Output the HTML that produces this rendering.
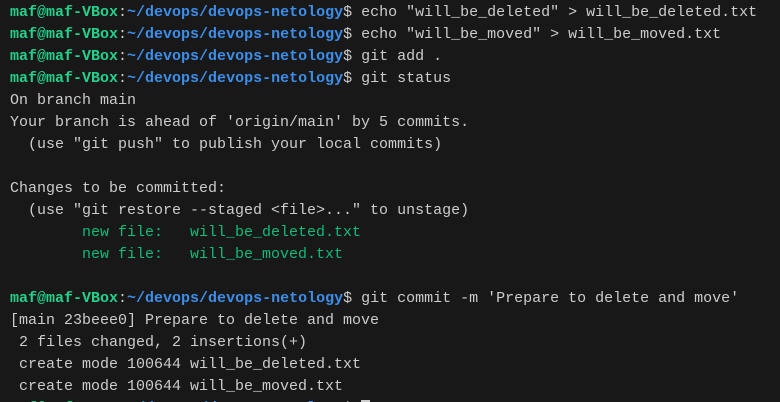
<!DOCTYPE html>
<html><head><meta charset="utf-8"><style>
html,body{margin:0;padding:0;background:#181818;width:780px;height:402px;overflow:hidden}
pre{margin:0;padding:2px 0 0 10px;font-family:"Liberation Mono",monospace;font-size:15px;line-height:22px;color:#cccccc;white-space:pre}
.g{color:#23d18b;font-weight:bold}.b{color:#3b8eea;font-weight:bold}.n{color:#0dbc79}
.c{background:#cccccc;color:#cccccc}
</style></head><body><pre><span class="g">maf@maf-VBox</span>:<span class="b">~/devops/devops-netology</span>$ echo "will_be_deleted" &gt; will_be_deleted.txt
<span class="g">maf@maf-VBox</span>:<span class="b">~/devops/devops-netology</span>$ echo "will_be_moved" &gt; will_be_moved.txt
<span class="g">maf@maf-VBox</span>:<span class="b">~/devops/devops-netology</span>$ git add .
<span class="g">maf@maf-VBox</span>:<span class="b">~/devops/devops-netology</span>$ git status
On branch main
Your branch is ahead of 'origin/main' by 5 commits.
  (use "git push" to publish your local commits)

Changes to be committed:
  (use "git restore --staged &lt;file&gt;..." to unstage)
        <span class="n">new file:   will_be_deleted.txt</span>
        <span class="n">new file:   will_be_moved.txt</span>

<span class="g">maf@maf-VBox</span>:<span class="b">~/devops/devops-netology</span>$ git commit -m 'Prepare to delete and move'
[main 23beee0] Prepare to delete and move
 2 files changed, 2 insertions(+)
 create mode 100644 will_be_deleted.txt
 create mode 100644 will_be_moved.txt
<span class="g">maf@maf-VBox</span>:<span class="b">~/devops/devops-netology</span>$ <span class="c"> </span></pre></body></html>
